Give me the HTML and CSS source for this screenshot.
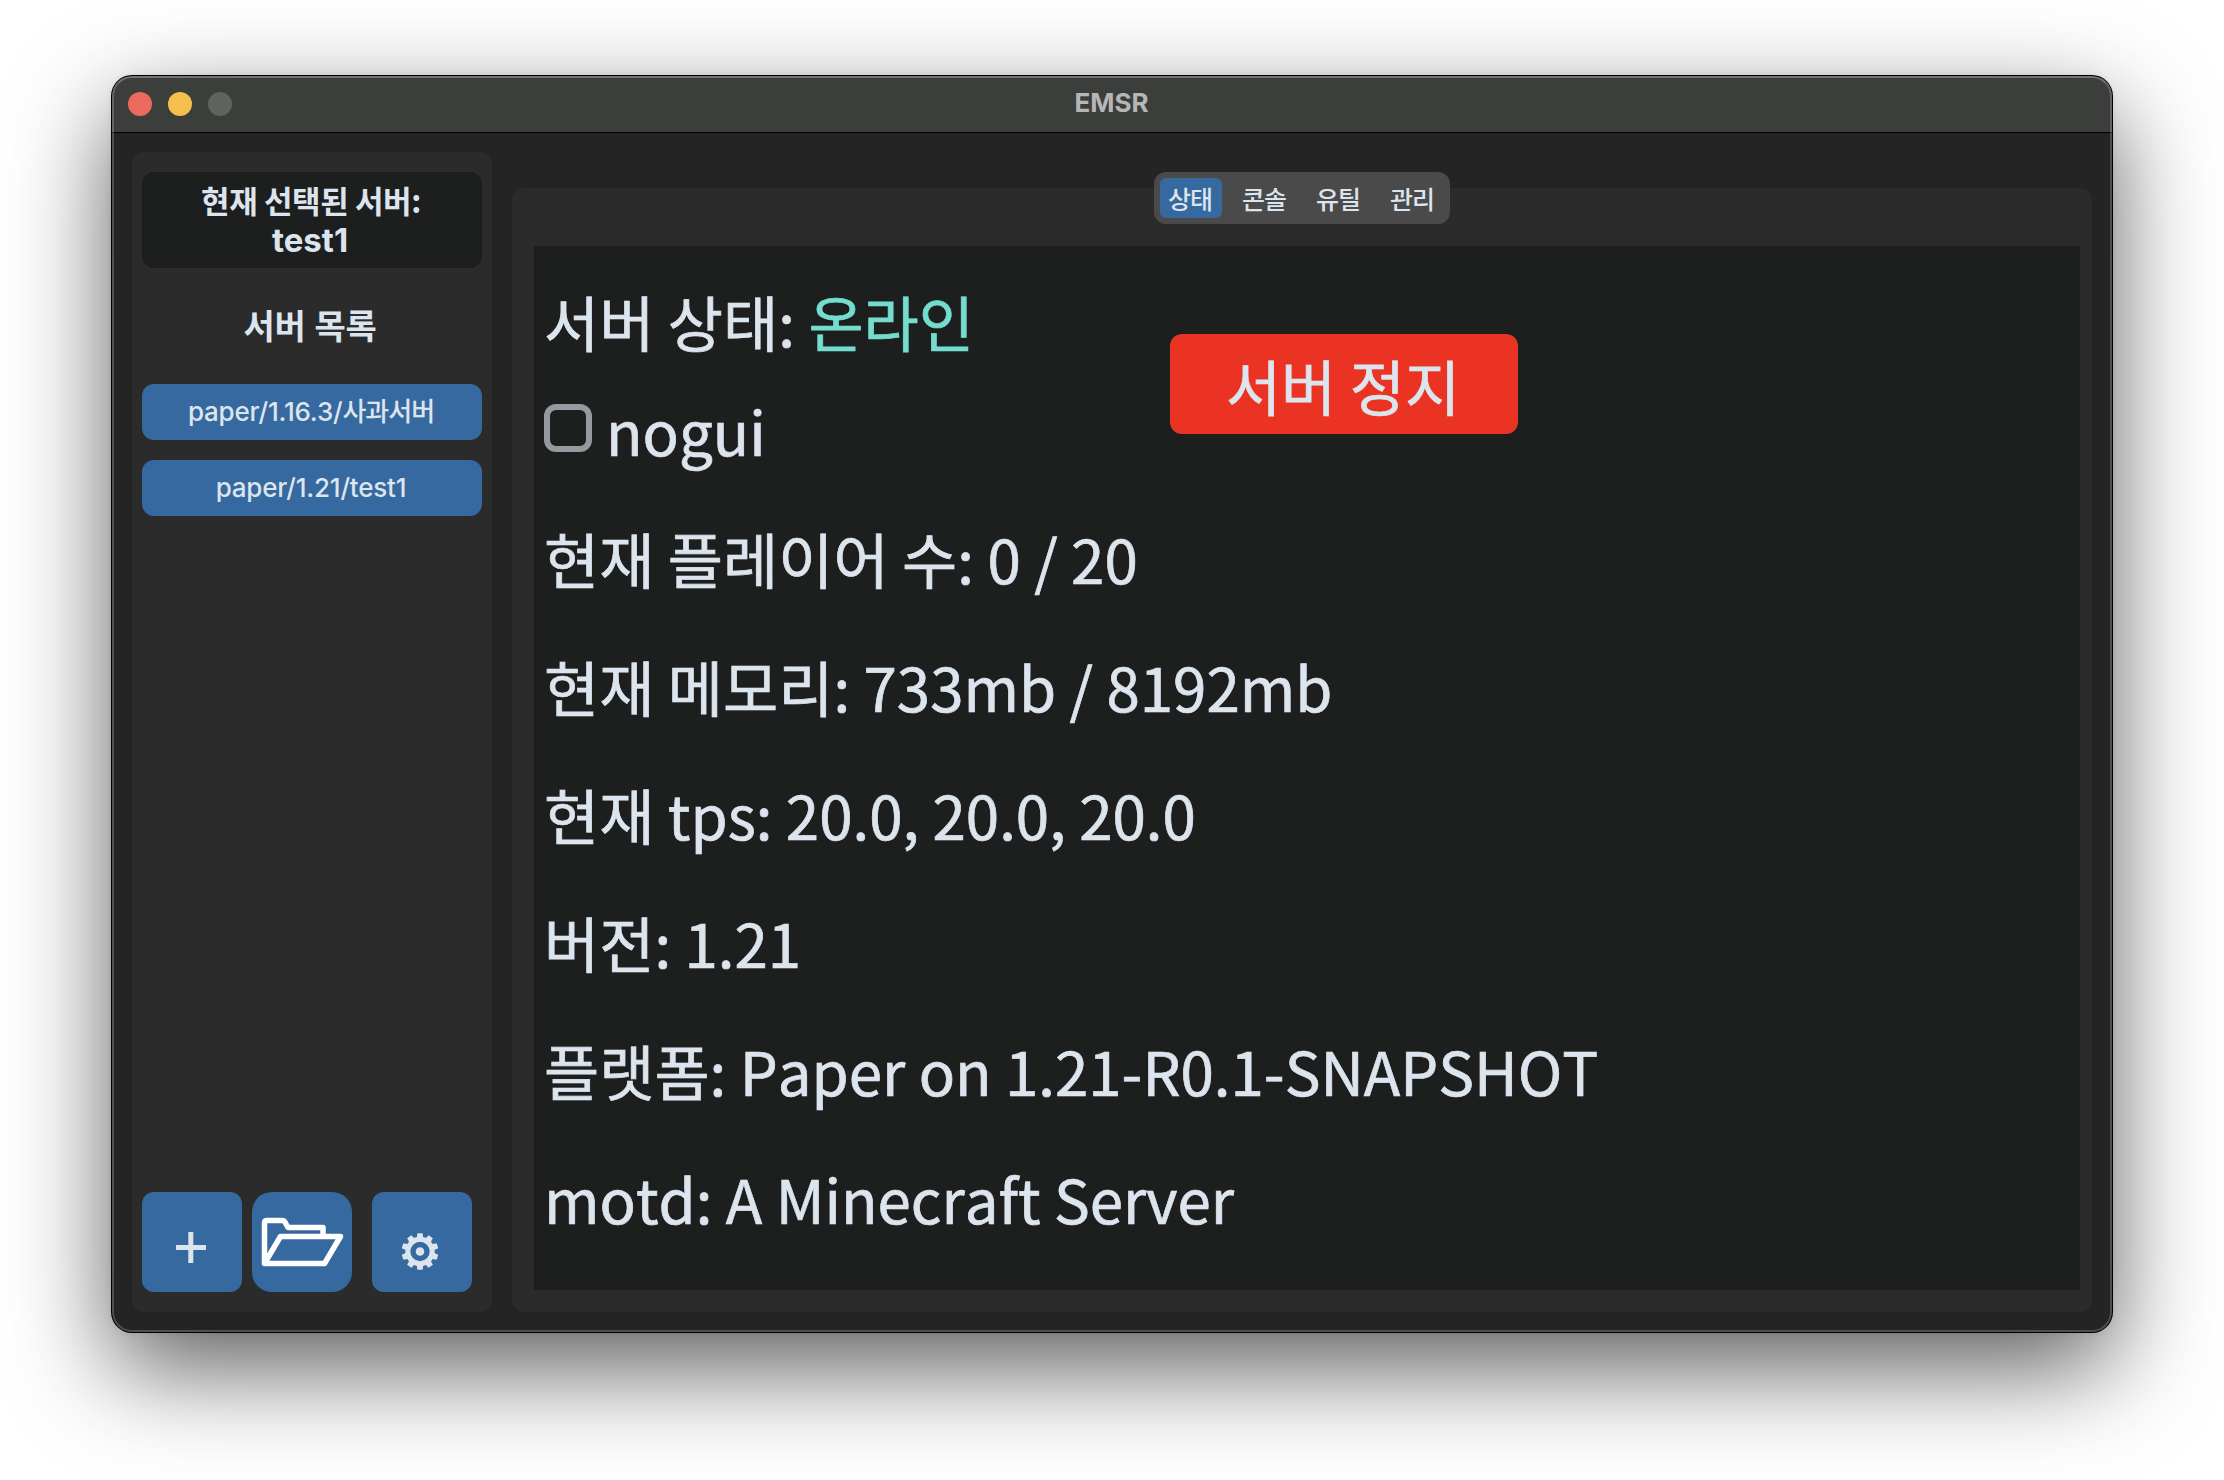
FILE: index.html
```html
<!DOCTYPE html>
<html lang="ko">
<head>
<meta charset="utf-8">
<title>EMSR</title>
<link rel="stylesheet" href="styles.css">
</head>
<body>
<div class="window">
  <header class="titlebar">
    <div class="lights"><span class="light close"></span><span class="light minimize"></span><span class="light disabled"></span></div>
    <span class="title">EMSR</span>
  </header>
  <div class="content">
    <aside class="sidebar">
      <div class="selected"><span class="selected-label">현재 선택된 서버:</span><span class="selected-name">test1</span></div>
      <h2 class="list-title">서버 목록</h2>
      <button class="server">paper/1.16.3/<span class="ko">사과서버</span></button>
      <button class="server">paper/1.21/test1</button>
      <div class="actions">
        <button class="action" aria-label="추가"><svg viewBox="0 0 100 100"><path d="M34 55.5H64M48.800 40V71" stroke="#dce4ee" stroke-width="5"/></svg></button>
        <button class="action folder" aria-label="폴더"><svg viewBox="0 0 100 100"><path d="M12.500 71.500V31Q12.500 28.500 15 28.500H30Q32.500 28.500 33.500 31L36 35.500H71V44M12.500 71.500L28.500 44.500H88.500L72.500 71.500Z" fill="none" stroke="#fff" stroke-width="5.500" stroke-linejoin="round"/></svg></button>
        <button class="action settings" aria-label="설정"><svg viewBox="-50 -50 100 100"><g transform="translate(-2 9.500)" fill="#dce4ee"><circle r="12.200" fill="none" stroke="#dce4ee" stroke-width="5"/><circle r="4.300"/><path id="tooth" d="M-3.300-13L-2.600-18.300H2.600L3.300-13Z"/><use href="#tooth" transform="rotate(36)"/><use href="#tooth" transform="rotate(72)"/><use href="#tooth" transform="rotate(108)"/><use href="#tooth" transform="rotate(144)"/><use href="#tooth" transform="rotate(180)"/><use href="#tooth" transform="rotate(216)"/><use href="#tooth" transform="rotate(252)"/><use href="#tooth" transform="rotate(288)"/><use href="#tooth" transform="rotate(324)"/></g></svg></button>
      </div>
    </aside>
    <main class="main">
      <nav class="tabs"><button class="tab active">상태</button><button class="tab">콘솔</button><button class="tab">유틸</button><button class="tab">관리</button></nav>
      <section class="status">
        <div class="top">
          <div class="state">
            <p class="line first">서버 상태: <span class="online">온라인</span></p>
            <label class="check"><span class="box"></span><span class="check-text">nogui</span></label>
          </div>
          <button class="stop">서버 정지</button>
        </div>
        <p class="line">현재 플레이어 수: 0 / 20</p>
        <p class="line">현재 메모리: 733mb / 8192mb</p>
        <p class="line">현재 tps: 20.0, 20.0, 20.0</p>
        <p class="line">버전: 1.21</p>
        <p class="line">플랫폼: Paper on 1.21-R0.1-SNAPSHOT</p>
        <p class="line">motd: A Minecraft Server</p>
      </section>
    </main>
  </div>
</div>
</body>
</html>
```
FILE: styles.css
```css
* { box-sizing: border-box; }
body {
  margin: 0;
  padding: 76px 112px 148px;
  height: 1480px;
  background: #fff;
  color: #dce4ee;
  font-family: "Inter", "Noto Sans CJK KR", sans-serif;
  overflow: hidden;
}
button { border: 0; margin: 0; padding: 0; color: inherit; font: inherit; }
.window {
  position: relative;
  width: 2000px;
  height: 1256px;
  border-radius: 20px;
  background: #242424;
  overflow: hidden;
  box-shadow: 0 0 0 1px #000, 0 36px 100px rgba(0, 0, 0, .64), 0 0 6px rgba(0, 0, 0, .1);
}
.window::after {
  content: "";
  position: absolute;
  inset: 0;
  border: 2px solid rgba(255, 255, 255, .2);
  border-top-color: rgba(255, 255, 255, .28);
  border-radius: 20px;
  pointer-events: none;
}
.titlebar {
  display: grid;
  grid-template-columns: 1fr auto 1fr;
  align-items: center;
  height: 56px;
  padding: 0 16px;
  background: #3c3e3c;
}
.lights { display: flex; gap: 16px; }
.light { width: 24px; height: 24px; border-radius: 50%; }
.close { background: #ed6a5e; }
.minimize { background: #f5bf4f; }
.disabled { background: #606260; }
.title { padding-right: 1px; color: #b5b6b5; font-size: 26px; font-weight: 700; line-height: 54px; height: 56px; }
.content {
  display: flex;
  gap: 20px;
  height: 1200px;
  padding: 19px 20px 20px;
  border-top: 1px solid #000;
}
.sidebar {
  display: flex;
  flex-direction: column;
  width: 360px;
  padding: 20px 10px;
  border-radius: 12px;
  background: #2b2b2b;
}
.selected {
  display: flex;
  flex-direction: column;
  height: 96px;
  padding-top: 8px;
  border-radius: 12px;
  background: #1d1e1e;
  text-align: center;
  font-size: 33px;
  font-weight: 700;
  line-height: 39px;
}
.selected-label {
  padding-right: 2px;
  font-family: "Noto Sans CJK KR", sans-serif;
  font-size: 31px;
  letter-spacing: -.4px;
  font-feature-settings: "locl" 0, "calt" 0;
}
.selected-name { padding: 2px 4px 0 0; }
.list-title {
  margin: 0;
  padding-right: 4px;
  height: 116px;
  text-align: center;
  font: 700 34px/114px "Noto Sans CJK KR", sans-serif;
  letter-spacing: -.3px;
}
.server {
  height: 56px;
  margin-bottom: 20px;
  padding-right: 2px;
  border-radius: 12px;
  background: #36699f;
  font-size: 26px;
  font-weight: 500;
  letter-spacing: -.2px;
  line-height: 56px;
}
.ko { font-family: "Noto Sans CJK KR", sans-serif; letter-spacing: -1px; line-height: 1; }
.actions { display: flex; margin-top: auto; gap: 10px; }
.action { width: 100px; height: 100px; border-radius: 12px; background: #36699f; }
.action svg { display: block; }
.folder { border-radius: 20px; }
.settings { margin-left: 10px; }
.main {
  position: relative;
  display: flex;
  flex-direction: column;
  align-items: center;
  width: 1580px;
  padding: 20px 12px 22px 22px;
}
.main::before {
  content: "";
  position: absolute;
  inset: 36px 0 0;
  border-radius: 12px;
  background: #2b2b2b;
}
.tabs {
  position: relative;
  display: flex;
  gap: 12px;
  height: 52px;
  margin-bottom: 22px;
  margin-right: 10px;
  padding: 6px;
  border-radius: 12px;
  background: #4a4a4a;
}
.tab {
  width: 62px;
  height: 40px;
  padding-right: 2px;
  border-radius: 6px;
  background: none;
  font: 500 25px/41px "Noto Sans CJK KR", sans-serif;
  letter-spacing: -1px;
}
.active { background: #36699f; }
.status {
  position: relative;
  width: 1546px;
  height: 1044px;
  padding: 0 10px;
  background: #1d1e1e;
  font: 400 60px/128px "Noto Sans CJK KR", sans-serif;
  font-feature-settings: "locl" 0, "calt" 0;
  font-kerning: none;
  -webkit-text-stroke: .7px currentColor;
}
.top { display: flex; height: 248px; }
.state { width: 626px; }
.line { margin: 0; height: 128px; white-space: nowrap; }
.first { padding-top: 11px; }
.online { color: #75ddce; }
.check { display: flex; gap: 14px; height: 100px; padding-top: 30px; }
.box { width: 48px; height: 48px; border: 6px solid #949a9f; border-radius: 12px; }
.check-text { line-height: 52px; }
.stop {
  width: 348px;
  height: 100px;
  margin-top: 88px;
  padding-right: 2px;
  border-radius: 12px;
  background: #ea3323;
  line-height: 102px;
  font-feature-settings: "locl" 0, "calt" 0;
}
```
